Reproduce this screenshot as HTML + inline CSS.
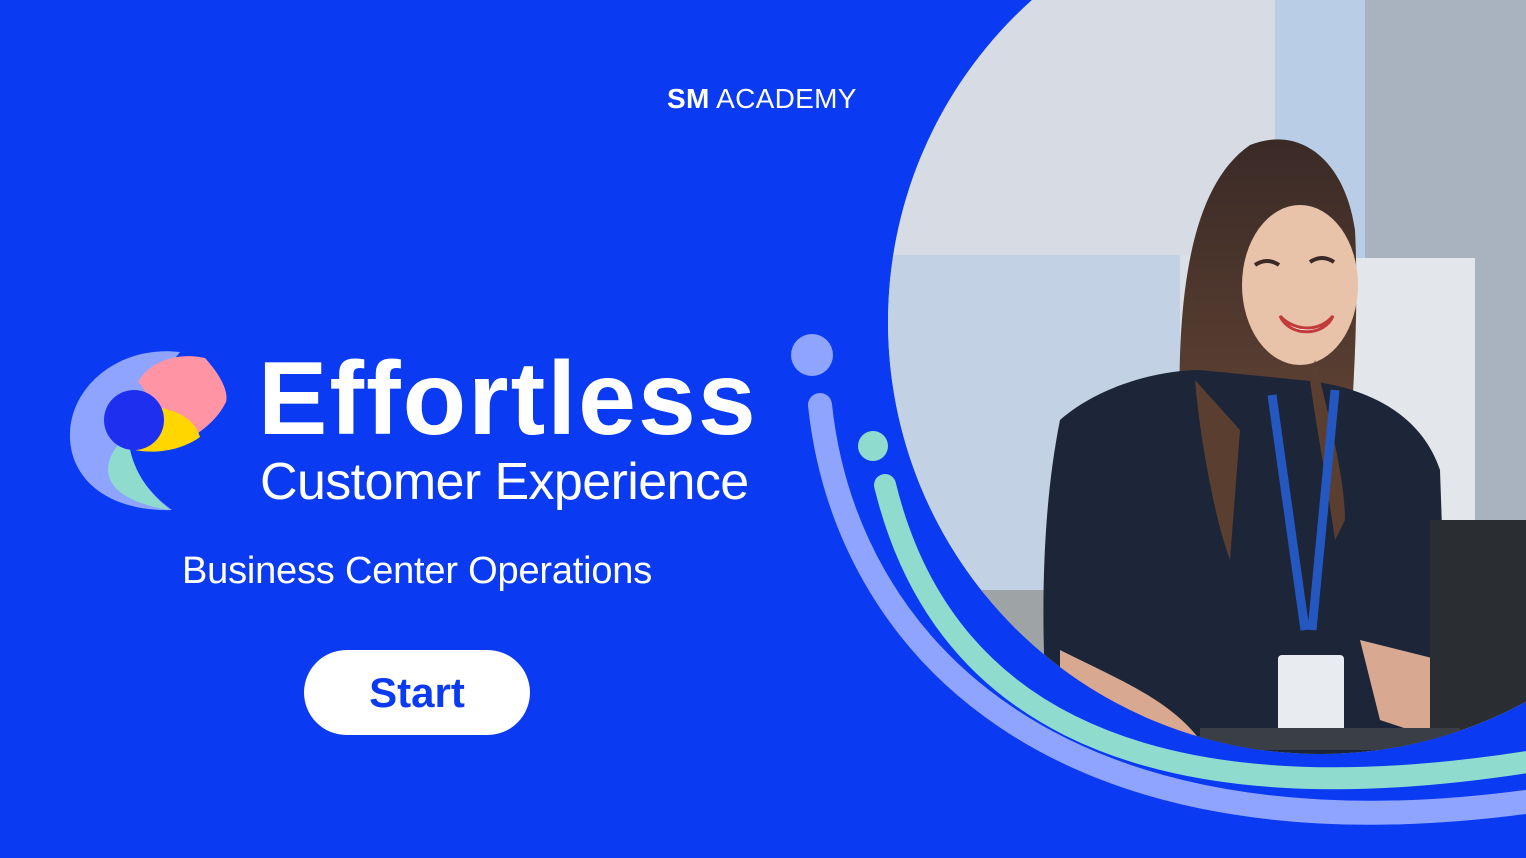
<!DOCTYPE html>
<html><head><meta charset="utf-8"><style>
html,body{margin:0;padding:0}
body{width:1526px;height:858px;overflow:hidden;background:#0a3af2;position:relative;font-family:"Liberation Sans",sans-serif}
.t{position:absolute;color:#fff;white-space:nowrap}
</style></head><body>
<svg width="1526" height="858" style="position:absolute;left:0;top:0">
<defs>
<clipPath id="c"><circle cx="1320" cy="322" r="432"/></clipPath>
<linearGradient id="wall" x1="0" y1="0" x2="1" y2="0"><stop offset="0" stop-color="#c9d0d8"/><stop offset="0.6" stop-color="#dfe4ea"/><stop offset="1" stop-color="#b8c2cc"/></linearGradient>
<linearGradient id="hair" x1="0" y1="0" x2="0" y2="1"><stop offset="0" stop-color="#3a2a26"/><stop offset="1" stop-color="#6b4a38"/></linearGradient>
</defs>
<g clip-path="url(#c)">
<rect x="880" y="0" width="646" height="858" fill="url(#wall)"/>
<rect x="880" y="0" width="400" height="255" fill="#d7dce4"/>
<rect x="1275" y="0" width="90" height="260" fill="#b9cde6"/>
<rect x="1365" y="0" width="161" height="858" fill="#a8b3bf"/>
<rect x="880" y="255" width="300" height="340" fill="#c3d1e4"/>
<rect x="1340" y="258" width="135" height="400" fill="#e3e6ea"/>
<rect x="880" y="590" width="200" height="200" fill="#9ea3a6"/>
<path d="M1185,520 C1175,380 1170,200 1250,145 C1300,125 1345,160 1355,230 C1360,330 1350,430 1345,520 Z" fill="url(#hair)"/>
<ellipse cx="1300" cy="285" rx="58" ry="80" fill="#e9c2aa"/>
<path d="M1255,265 q12,-8 24,0 M1310,262 q12,-8 24,0" stroke="#3a2a26" stroke-width="4" fill="none"/>
<path d="M1060,420 C1100,385 1160,370 1200,370 L1300,380 C1360,385 1420,410 1440,470 L1450,760 L1050,760 C1040,640 1040,520 1060,420 Z" fill="#1c2638"/>
<path d="M1195,380 C1200,440 1215,520 1230,560 L1240,430 Z" fill="#5a3e30"/>
<path d="M1315,360 C1330,420 1345,480 1345,520 L1335,540 C1325,470 1315,420 1310,380Z" fill="#5a3e30"/>
<path d="M1272,395 L1305,630 M1335,390 L1312,630" stroke="#2458c0" stroke-width="9" fill="none"/>
<rect x="1278" y="655" width="66" height="78" rx="4" fill="#e8ecf0"/>
<path d="M1060,650 C1120,680 1170,700 1200,740 L1060,760Z" fill="#d8a890"/>
<path d="M1360,640 L1440,660 L1440,740 L1380,720Z" fill="#d8a890"/>
<rect x="1430" y="520" width="96" height="220" fill="#2a2e33"/>
<rect x="1200" y="728" width="260" height="22" fill="#3a3f46"/>
<path d="M1280,316 C1295,332 1320,332 1333,316 C1325,336 1290,338 1280,316Z" fill="#fff" stroke="#c23a3a" stroke-width="3"/>
</g>
<path d="M820,405 C845,640 1050,870 1540,800" stroke="#8fa4ff" stroke-width="24" fill="none" stroke-linecap="round"/>
<circle cx="812" cy="355" r="21" fill="#8fa4ff"/>
<path d="M885,485 C935,690 1110,830 1540,760" stroke="#8fdcce" stroke-width="22" fill="none" stroke-linecap="round"/>
<circle cx="873" cy="446" r="15" fill="#8fdcce"/>
<!-- logo -->
<path d="M180,352 C120,345 72,385 70,432 C68,480 110,512 172,510 C130,480 118,435 140,405 C155,380 170,365 180,352Z" fill="#8fa4ff"/>
<path d="M118,445 C98,470 105,500 170,510 C145,490 135,470 130,450Z" fill="#8fdcce"/>
<path d="M138,382 C150,360 180,352 205,358 C225,380 228,395 226,402 C215,425 190,440 170,448 C160,420 150,395 138,382Z" fill="#ff94a4"/>
<path d="M162,408 C180,412 195,420 200,437 C185,448 160,455 135,450 C150,440 160,425 162,408Z" fill="#ffd600"/>
<circle cx="134" cy="420" r="30" fill="#1e2ff0"/>
</svg>
<div class="t" style="left:667px;top:83px;font-size:28px;letter-spacing:0.3px"><b>SM</b> ACADEMY</div>
<div class="t" style="left:258px;top:340px;font-size:104px;font-weight:bold;letter-spacing:2px">Effortless</div>
<div class="t" style="left:260px;top:452px;font-size:52px;letter-spacing:-0.6px">Customer Experience</div>
<div class="t" style="left:182px;top:550px;font-size:38px;letter-spacing:-0.2px">Business Center Operations</div>
<div style="position:absolute;left:304px;top:650px;width:226px;height:85px;border-radius:43px;background:#fff;color:#0a3af2;font-weight:bold;font-size:42px;text-align:center;line-height:85px">Start</div>
</body></html>
